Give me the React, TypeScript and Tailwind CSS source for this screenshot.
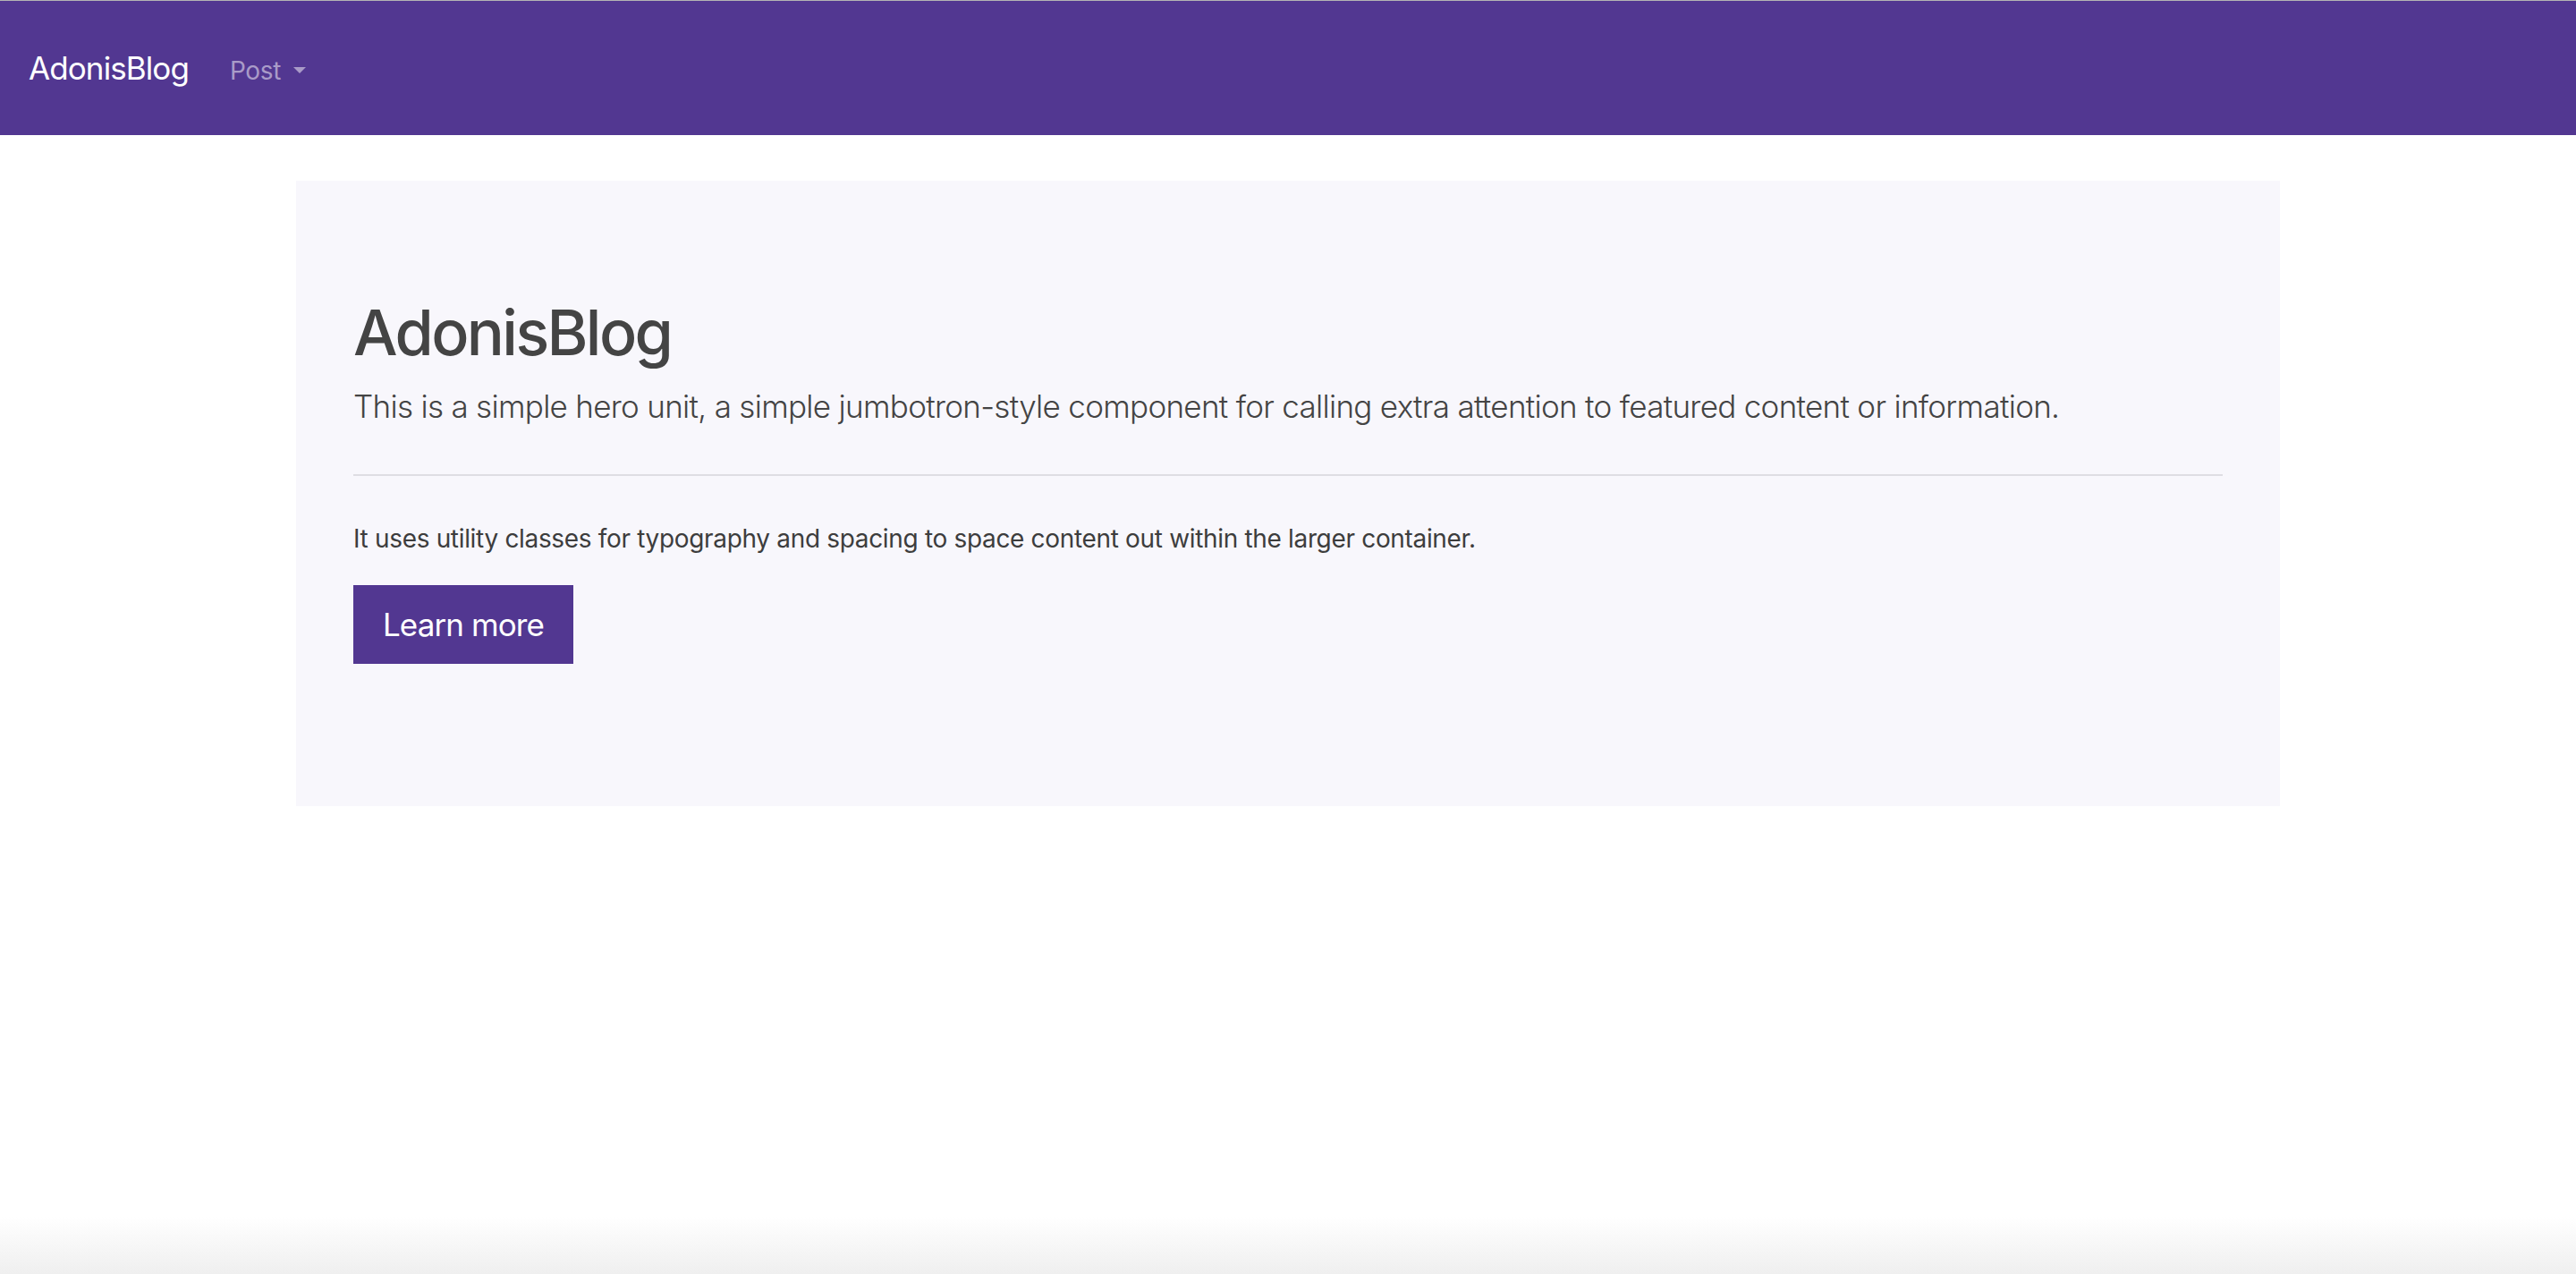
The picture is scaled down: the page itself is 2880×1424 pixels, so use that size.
import React from "react";

const font = { fontFamily: "Inter, 'Noto Sans', sans-serif" };

function Navbar() {
  return (
    <nav className="flex h-[151px] items-center border-t border-[#b4b4b4] bg-[#523791] pl-[32px]">
      <a href="#" className="text-[35px] leading-[52px] tracking-[-0.9px] text-white">
        AdonisBlog
      </a>
      <button className="ml-[46px] mt-[5px] flex items-center text-[28px] leading-[42px] tracking-[-0.4px] text-[#a99bc8]">
        Post
        {/* dropdown caret */}
        <span className="ml-[14px] h-0 w-0 border-x-[7px] border-t-[7px] border-x-transparent border-t-[#a99bc8]" />
      </button>
    </nav>
  );
}

function Jumbotron() {
  return (
    <section className="mx-auto mt-[51px] w-[2218px] bg-[#f8f7fc] px-[64px] pt-[128px] pb-[159px] text-[#444444]">
      <h1 className="text-[70px] font-medium leading-[84px] tracking-[-2.6px]">AdonisBlog</h1>
      <p className="mt-[14px] text-[35px] font-light leading-[52px] tracking-[-0.7px]">
        This is a simple hero unit, a simple jumbotron-style component for calling extra attention to featured
        content or information.
      </p>
      <hr className="mt-[50px] h-[2px] border-0 bg-[#dedde3]" />
      <p className="mt-[49px] text-[28px] leading-[42px] tracking-[-0.33px] text-[#3d3d3d]">
        It uses utility classes for typography and spacing to space content out within the larger container.
      </p>
      <a
        href="#"
        className="mt-[31px] inline-flex h-[88px] w-[246px] items-center justify-center bg-[#523791] text-[35px] tracking-[-0.9px] text-white"
      >
        Learn more
      </a>
    </section>
  );
}

export default function App() {
  return (
    <div className="flex min-h-screen flex-col bg-white" style={font}>
      <Navbar />
      <Jumbotron />
      <div className="flex-1" />
      {/* window shadow at the bottom edge */}
      <div className="h-[64px] bg-gradient-to-b from-white to-[#efefef]" />
    </div>
  );
}
